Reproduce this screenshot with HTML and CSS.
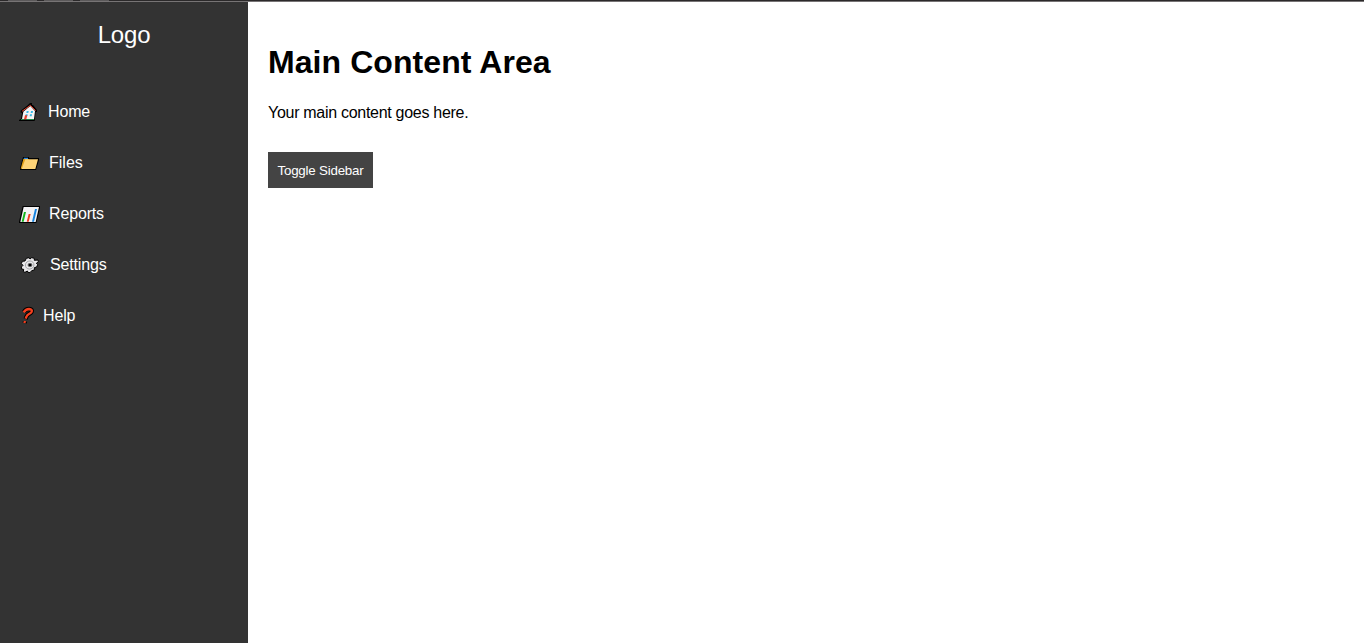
FILE: index.html
```
<!DOCTYPE html>
<html lang="en">
<head>
<meta charset="utf-8">
<title>Main Content Area</title>
<link rel="stylesheet" href="styles.css">
</head>
<body>
<div class="top-edge"><i class="tab"></i><i class="tab"></i><i class="tab"></i></div>
<div class="layout">
  <aside class="sidebar">
    <div class="logo">Logo</div>
    <nav class="menu">
      <a class="item home"><svg class="icon" viewBox="54 36 66 60">
        <path fill="#000" d="M90 39h6v6h3l12 15v6h-4l-3 27H57v-3l6-4 3-18h-4v-6l21-16z"/>
        <path fill="#f6f4f4" d="M91 48l14 15-3 25H66l4-23z"/>
        <path fill="none" stroke="#e8432e" stroke-width="3" d="M66 64l25-18 16 16"/>
        <path fill="#35b9e6" d="M80 63h6l-1 6h-6zM93 63h6l-1 6h-6zM77 73h6l-1 6h-6zM90 73h6l-1 6h-6z"/>
        <path fill="#e8432e" d="M75 76h7l-3 12h-7z"/>
        <path fill="#21874b" d="M63 87h9v3h-9zM79 87h23v3H79z"/>
      </svg><span>Home</span></a>
      <a class="item files"><svg class="icon" viewBox="54 189 66 60">
        <path fill="#000" d="M69 201h18v3h30v6l-9 30H60v-6z"/>
        <path fill="#2f86dc" d="M72 203h12v4H71z"/>
        <path fill="#e4a21b" d="M70 207h17l-12 18-9 11h-4z"/>
        <path fill="#ffd477" d="M76 208h38l-8 29H65z"/>
      </svg><span>Files</span></a>
      <a class="item reports"><svg class="icon" viewBox="54 342 66 60">
        <path fill="#000" d="M68 348h52v6l-11 45H57v-4z"/>
        <path fill="#f3f2f4" d="M71 351h46l-10 45H61z"/>
        <path fill="#16b51c" d="M72 366h6l-7 29h-6z"/>
        <path fill="#f23b20" d="M86 372h6l-6 23h-6z"/>
        <path fill="#1683df" d="M105 357h6l-9 38h-6z"/>
      </svg><span>Reports</span></a>
      <a class="item settings"><svg class="icon" viewBox="54 495 66 60">
        <path fill="#e9e8ea" stroke="#000" stroke-width="3" stroke-linejoin="round" d="M79 505l8-2 3 4 5-4 8 2v6l11-1 1 5-6 5 4 4-3 7-7 2v7l-8 2-5 6-6-1-2-4-7 4-5-2 1-7-6-1-1-6 5-5-5-5 3-7 8-1z"/>
        <ellipse cx="89" cy="525" rx="13" ry="12" fill="none" stroke="#9a9ca0" stroke-width="2.5" transform="rotate(-20 89 525)"/>
        <ellipse cx="90" cy="525" rx="6" ry="5" fill="#000" stroke="#6b6d70" stroke-width="2.5"/>
      </svg><span>Settings</span></a>
      <a class="item help"><svg class="icon" viewBox="54 648 66 60">
        <g fill="none" stroke-linejoin="round">
          <path stroke="#000" stroke-width="13" d="M72 666q5-9 15-9 11 1 8 8-2 4-8 7-6 3-8 9l-2 6M75 694l-1 5"/>
          <path stroke="#f5401f" stroke-width="7" d="M71 667q6-10 16-10 11 1 8 8-2 4-8 7-6 3-8 9l-2 5M75 693l-2 6"/>
        </g>
      </svg><span>Help</span></a>
    </nav>
  </aside>
  <main class="content">
    <h1 class="title">Main Content Area</h1>
    <p class="text">Your main content goes here.</p>
    <button class="toggle">Toggle Sidebar</button>
  </main>
</div>
</body>
</html>
```
FILE: styles.css
```
* { box-sizing: border-box; }
body { margin: 0; height: 643px; overflow: hidden; background: #fff; font: 16px/18px "Liberation Sans", Arial, sans-serif; color: #000; }
.top-edge { height: 2px; display: flex; gap: 7px; padding-left: 8px; background: #2b292a; border-bottom: 1px solid #777475; }
.tab { width: 29px; height: 1px; background: #5b595a; }
.layout { display: flex; height: 641px; }
.sidebar { width: 248px; background: #333; color: #fff; }
.logo { padding: 19px 0; font-size: 24px; line-height: 28px; letter-spacing: -0.2px; text-align: center; }
.menu { padding-top: 18px; }
.item { display: flex; height: 51px; padding: 17px 0 16px 18px; color: #fff; letter-spacing: -0.15px; }
.icon { width: 22px; height: 20px; flex: none; margin-top: -1px; }
.item span { margin-left: 8px; }
.files span, .reports span { margin-left: 9px; }
.files { letter-spacing: 0; }
.settings span { margin-left: 10px; }
.help span { margin-left: 3px; }
.content { flex: 1; padding: 42px 20px; }
.title { margin: 0; font-size: 32px; line-height: 37px; letter-spacing: 0.07px; }
.text { margin: 23px 0 0; letter-spacing: -0.29px; }
.toggle { display: block; width: 105px; height: 36px; margin-top: 30px; padding: 0; border: 0; background: #444; color: #fff; font: 13.333px "Liberation Sans", Arial, sans-serif; letter-spacing: -0.21px; white-space: nowrap; }
```
